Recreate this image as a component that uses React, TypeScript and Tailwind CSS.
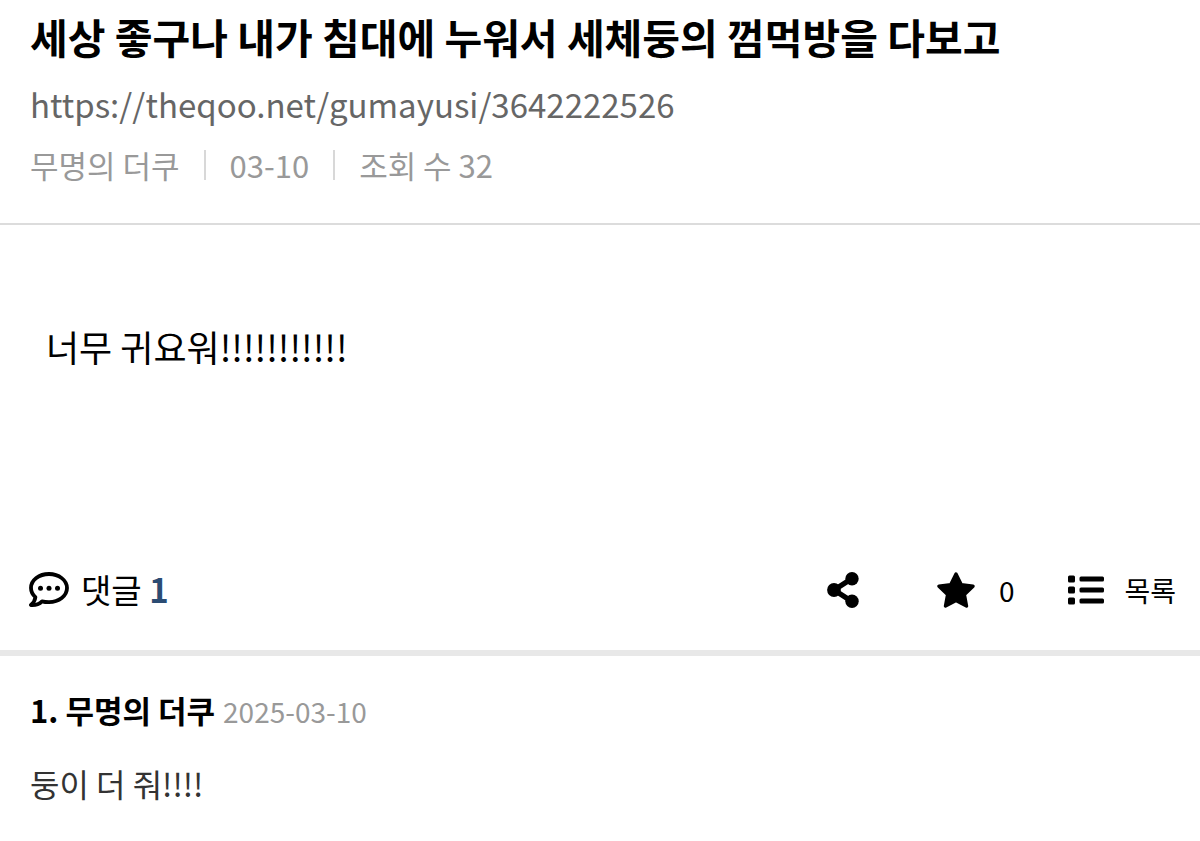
const POST = {
  title: "세상 좋구나 내가 침대에 누워서 세체둥의 껌먹방을 다보고",
  url: "https://theqoo.net/gumayusi/3642222526",
  author: "무명의 더쿠",
  date: "03-10",
  views: 32,
  body: "너무 귀요워!!!!!!!!!!!",
  stars: 0,
};

const COMMENTS = [
  { id: 1, author: "무명의 더쿠", date: "2025-03-10", text: "둥이 더 줘!!!!" },
];

function BubbleIcon() {
  return (
    <svg viewBox="0 0 40 36" className="h-9 w-10" aria-hidden="true">
      <path
        d="M20 2C10 2 2 8.2 2 16c0 3.600 1.600 6.600 4.400 9.100C6 28.500 4.400 30.900 2 33c4.600 0.300 8.600-1.300 11-3.700 2.200 0.600 4.500 0.800 7 0.800 10 0 18-6.200 18-14S30 2 20 2z"
        fill="none"
        stroke="currentColor"
        strokeWidth="3.8"
        strokeLinejoin="round"
      />
      <circle cx="11.500" cy="16.200" r="2.500" />
      <circle cx="20" cy="16.200" r="2.500" />
      <circle cx="28.500" cy="16.200" r="2.500" />
    </svg>
  );
}

function ShareIcon() {
  return (
    <svg viewBox="0 0 32 36" className="h-9 w-8" aria-hidden="true">
      <path d="M25 6.500L7 18l18 11.500" fill="none" stroke="currentColor" strokeWidth="5.200" />
      <circle cx="25" cy="6.700" r="6.700" />
      <circle cx="7" cy="18" r="6.900" />
      <circle cx="25" cy="29.200" r="6.700" />
    </svg>
  );
}

function StarIcon() {
  return (
    <svg viewBox="0 0 38 36" className="h-9 w-[38px]" aria-hidden="true">
      <path
        d="M19 2l5.200 10.600L36 14.200l-8.600 8.400L29.500 34 19 28.500 8.500 34l2.100-11.400L2 14.200l11.800-1.600z"
        fill="currentColor"
        stroke="currentColor"
        strokeWidth="3.400"
        strokeLinejoin="round"
      />
    </svg>
  );
}

function ListIcon() {
  return (
    <svg viewBox="0 0 36 30" className="h-[30px] w-9" fill="currentColor" aria-hidden="true">
      <rect x="0" y="0.500" width="7" height="7" rx="1.500" />
      <rect x="0" y="11.500" width="7" height="7" rx="1.500" />
      <rect x="0" y="22.500" width="7" height="7" rx="1.500" />
      <rect x="11.500" y="1.500" width="24.500" height="5" rx="1.500" />
      <rect x="11.500" y="12.500" width="24.500" height="5" rx="1.500" />
      <rect x="11.500" y="23.500" width="24.500" height="5" rx="1.500" />
    </svg>
  );
}

function Divider() {
  return <span className="h-[30px] w-[2px] bg-[#d8d8d8]" />;
}

function PostHeader() {
  return (
    <header className="border-b-2 border-[#dcdcdc] px-[30px] pt-2 pb-[31px]">
      <h1 className="text-[41px] leading-[56px] font-bold">{POST.title}</h1>
      <a href={POST.url} className="block pt-2.5 text-[33px] leading-[60px] text-[#666]">
        {POST.url}
      </a>
      <div className="flex items-center gap-6 pt-1 text-[31px] leading-[54px] text-[#999]">
        <span>{POST.author}</span>
        <Divider />
        <span>{POST.date}</span>
        <Divider />
        <span>조회 수 {POST.views}</span>
      </div>
    </header>
  );
}

function Toolbar() {
  return (
    <div className="flex h-[126px] items-center justify-between border-b-6 border-[#e8e8e8] pr-6 pl-[29px]">
      <div className="flex items-center gap-3 text-[33px]">
        <BubbleIcon />
        <span>
          댓글 <b className="text-[#2b4c73]">{COMMENTS.length}</b>
        </span>
      </div>
      <div className="flex items-center text-[28px]">
        <button type="button" aria-label="공유" className="mr-[78px]">
          <ShareIcon />
        </button>
        <button type="button" className="mr-[54px] flex items-center gap-6">
          <StarIcon />
          {POST.stars}
        </button>
        <button type="button" className="flex items-center gap-5">
          <ListIcon />
          목록
        </button>
      </div>
    </div>
  );
}

export default function App() {
  return (
    <main className="min-h-screen bg-white font-['Noto_Sans_CJK_KR',sans-serif] text-black">
      <PostHeader />
      <p className="px-[46px] pt-[84px] pb-[147px] text-4xl leading-[74px]">{POST.body}</p>
      <Toolbar />
      <ul className="px-[30px] pt-6">
        {COMMENTS.map((comment) => (
          <li key={comment.id}>
            <div className="flex items-baseline gap-2 leading-[60px]">
              <b className="text-[31px]">
                {comment.id}. {comment.author}
              </b>
              <span className="text-[28px] text-[#999]">{comment.date}</span>
            </div>
            <p className="pt-3 text-[32px] leading-[60px] text-[#333]">{comment.text}</p>
          </li>
        ))}
      </ul>
    </main>
  );
}
